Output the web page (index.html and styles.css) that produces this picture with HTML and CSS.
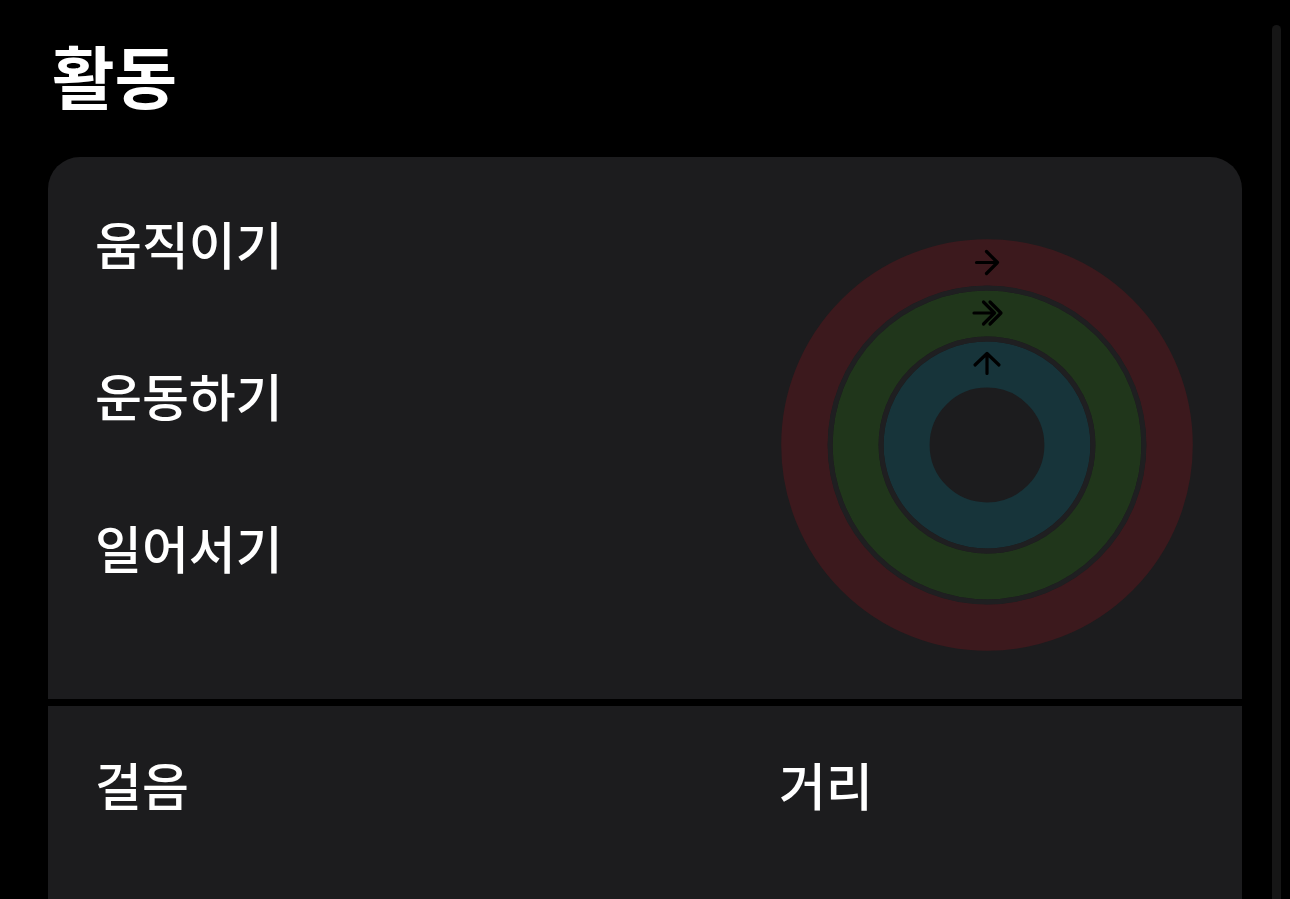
FILE: index.html
```html
<!DOCTYPE html>
<html lang="ko">
<head>
<meta charset="utf-8">
<title>활동</title>
<link rel="stylesheet" href="styles.css">
</head>
<body>
<main class="page">
  <h1 class="title">활동</h1>
  <div class="card">
    <section class="section rings-section">
      <div class="labels">
        <div class="label">움직이기</div>
        <div class="label">운동하기</div>
        <div class="label">일어서기</div>
      </div>
      <svg class="rings" width="412" height="412" viewBox="0 0 412 412">
        <circle cx="206" cy="206" r="182.5" fill="none" stroke="#3c191d" stroke-width="46.6"/>
        <circle cx="206" cy="206" r="131.4" fill="none" stroke="#20361b" stroke-width="46"/>
        <circle cx="206" cy="206" r="80.4" fill="none" stroke="#17343a" stroke-width="46"/>
        <circle cx="206" cy="206" r="156.9" fill="none" stroke="#1f1f21" stroke-width="5"/>
        <circle cx="206" cy="206" r="105.9" fill="none" stroke="#1f1f21" stroke-width="5"/>
        <g fill="none" stroke="#000" stroke-width="3.2" stroke-linecap="round" stroke-linejoin="round">
          <path d="M195.5 23.5 H216.5 M205.5 12.5 L216.5 23.5 L205.5 34.5"/>
          <path d="M193 74 H213 M202.5 63 L213.5 74 L202.5 85 M209 63 L220 74 L209 85"/>
          <path d="M206 134.5 V115 M194 126 L206 114.5 L218 126"/>
        </g>
      </svg>
    </section>
    <section class="section stats-section">
      <div class="label">걸음</div>
      <div class="label">거리</div>
    </section>
  </div>
</main>
<div class="scrollbar"></div>
</body>
</html>
```

FILE: styles.css
```css
html, body {
  margin: 0;
  padding: 0;
  background: #000;
  color: #fff;
  font-family: "Noto Sans CJK KR", "Noto Sans", sans-serif;
  overflow: hidden;
}

.page {
  width: 1194px;
  padding-left: 48px;
}

.title {
  margin: 0;
  padding: 30px 0 0 4px;
  height: 157px;
  box-sizing: border-box;
  font-size: 68px;
  font-weight: 700;
  line-height: 90px;
}

.card {
  display: flex;
  flex-direction: column;
  gap: 7px;
  border-radius: 32px 32px 0 0;
  overflow: hidden;
}

.section {
  background: #1c1c1e;
  padding: 45px 49px 0 47px;
}

.rings-section {
  height: 542px;
  box-sizing: border-box;
  display: flex;
  justify-content: space-between;
  align-items: flex-start;
}

.labels {
  display: flex;
  flex-direction: column;
  gap: 70px;
}

.label {
  font-size: 51px;
  font-weight: 500;
  line-height: 82px;
}

.rings {
  display: block;
  margin-top: 37px;
}

.stats-section {
  height: 300px;
  display: grid;
  grid-template-columns: 684px 1fr;
  align-content: start;
}

.stats-section .label {
  line-height: 66px;
}

.scrollbar {
  position: fixed;
  top: 25px;
  left: 1272px;
  width: 9px;
  height: 900px;
  border-radius: 5px;
  background: #161616;
}
```
